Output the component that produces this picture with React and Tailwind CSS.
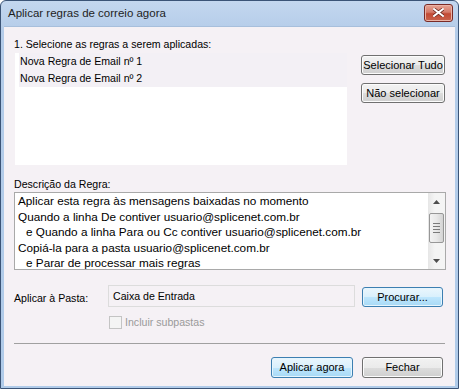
const btn =
  "flex items-center justify-center rounded-[3px] border border-[#707070] bg-[linear-gradient(#f2f2f2_0%,#ebebeb_50%,#dddddd_51%,#cfcfcf_100%)] text-[11px] text-black shadow-[inset_0_0_0_1px_#fcfcfc]";
const btnBlue =
  "flex items-center justify-center rounded-[3px] border border-[#3c7fb1] bg-[linear-gradient(#eaf6fd_0%,#d9f0fc_50%,#bee6fd_51%,#a7d9f5_100%)] text-[11px] text-black shadow-[inset_0_0_0_1px_#e6f5fd]";

function ScrollBar() {
  return (
    <div className="flex w-[17px] shrink-0 flex-col bg-[linear-gradient(90deg,#e6e6e6,#f4f4f4_40%,#f4f4f4)]">
      <div className="flex h-[17px] items-center justify-center">
        <svg width="7" height="4" viewBox="0 0 7 4">
          <path d="M3.5 0 L7 4 L0 4 Z" fill="#4d4d4d" />
        </svg>
      </div>
      <div className="mx-[1px] mt-[3px] flex h-[30px] items-center justify-center rounded-[2px] border border-[#979797] bg-[linear-gradient(90deg,#f3f3f3,#e8e8e8_50%,#d4d4d4)]">
        <div className="flex flex-col gap-[2px]">
          <div className="h-[1px] w-[7px] bg-[#7a7a7a]" />
          <div className="h-[1px] w-[7px] bg-[#7a7a7a]" />
          <div className="h-[1px] w-[7px] bg-[#7a7a7a]" />
          <div className="h-[1px] w-[7px] bg-[#7a7a7a]" />
        </div>
      </div>
      <div className="flex-1" />
      <div className="flex h-[17px] items-center justify-center">
        <svg width="7" height="4" viewBox="0 0 7 4">
          <path d="M0 0 L7 0 L3.5 4 Z" fill="#4d4d4d" />
        </svg>
      </div>
    </div>
  );
}

export default function App() {
  const lines = [
    { t: "Aplicar esta regra às mensagens baixadas no momento", i: false },
    { t: "Quando a linha De contiver usuario@splicenet.com.br", i: false },
    { t: "e Quando a linha Para ou Cc contiver usuario@splicenet.com.br", i: true },
    { t: "Copiá-la para a pasta usuario@splicenet.com.br", i: false },
    { t: "e Parar de processar mais regras", i: true },
  ];

  return (
    <div
      className="flex h-[389px] w-[459px] flex-col overflow-hidden rounded-t-[6px] border border-[#3b5477] bg-[linear-gradient(#c3d7ef,#b4cce9_30px,#b0cbe9)] px-[3px] pb-[2px] text-black"
      style={{ fontFamily: '"Liberation Sans", Arial, sans-serif' }}
    >
      {/* Title bar */}
      <div className="flex h-[25px] shrink-0 items-center justify-between pl-[4px] pr-[2px]">
        <span className="text-[11.5px] text-[#1e1e1e]">Aplicar regras de correio agora</span>
        <div className="mb-[2px] flex h-[18px] w-[29px] items-center justify-center rounded-[3px] border border-[#7a2a26] bg-[linear-gradient(#e6a394,#d47a69_45%,#c24a34_55%,#c9644d)] shadow-[inset_0_0_0_1px_#eab3a6]">
          <svg width="11" height="9" viewBox="0 0 11 9">
            <path
              d="M1 1 L10 8 M10 1 L1 8"
              stroke="#6b2a20"
              strokeWidth="3.4"
              strokeLinecap="square"
            />
            <path
              d="M1 1 L10 8 M10 1 L1 8"
              stroke="#ffffff"
              strokeWidth="2"
              strokeLinecap="square"
            />
          </svg>
        </div>
      </div>

      {/* Client area */}
      <div className="flex flex-1 flex-col border-t border-[#a7bfdc] bg-[#f5f1f5] px-[10px] pt-[10px] text-[10.6px]">
        <div className="h-[14px] leading-[14px]">1. Selecione as regras a serem aplicadas:</div>

        <div className="mt-[2px] flex">
          <div className="ml-[1px] flex h-[112px] w-[332px] flex-col bg-white pl-[4px]">
            <div className="h-[17px] bg-[#f3f0f5] pl-[1px] leading-[17px]">
              Nova Regra de Email nº 1
            </div>
            <div className="h-[17px] bg-[#f3f0f5] pl-[1px] leading-[17px]">
              Nova Regra de Email nº 2
            </div>
          </div>
          <div className="ml-[14px] flex flex-col gap-[8px] pt-[2px]">
            <button className={`${btn} h-[20px] w-[84px]`}>Selecionar Tudo</button>
            <button className={`${btn} h-[20px] w-[84px]`}>Não selecionar</button>
          </div>
        </div>

        <div className="mt-[12px] h-[14px] leading-[14px]">Descrição da Regra:</div>

        <div className="mt-[1px] flex h-[78px] w-[432px] border border-[#a9a9a9] bg-white">
          <div className="flex-1 overflow-hidden pl-[3px] text-[11.75px] leading-[15.6px]">
            {lines.map((l, k) => (
              <div key={k} className={`whitespace-nowrap ${l.i ? "pl-[8px]" : ""}`}>
                {l.t}
              </div>
            ))}
          </div>
          <ScrollBar />
        </div>

        <div className="mt-[15px] flex items-start">
          <div className="w-[94px] pt-[6px] leading-[14px]">Aplicar à Pasta:</div>
          <div className="h-[22px] w-[247px] border border-[#dcdcdc] pl-[4px] pt-[3px] leading-[14px]">
            Caixa de Entrada
          </div>
          <button className={`${btnBlue} ml-[7px] mt-[2px] h-[20px] w-[81px]`}>Procurar...</button>
        </div>

        <div className="ml-[95px] mt-[8px] flex items-center gap-[3px]">
          <div className="h-[13px] w-[13px] border border-[#c4c4c4] bg-[#f4f4f4]" />
          <span className="text-[#9a9a9a]">Incluir subpastas</span>
        </div>

        <div className="mt-[12px] h-[1px] w-[431px] bg-[#a0a0a0]" />

        <div className="mt-[13px] flex justify-end gap-[9px] pr-[2px]">
          <button className={`${btnBlue} h-[21px] w-[82px]`}>Aplicar agora</button>
          <button className={`${btn} h-[21px] w-[81px]`}>Fechar</button>
        </div>
      </div>
    </div>
  );
}
